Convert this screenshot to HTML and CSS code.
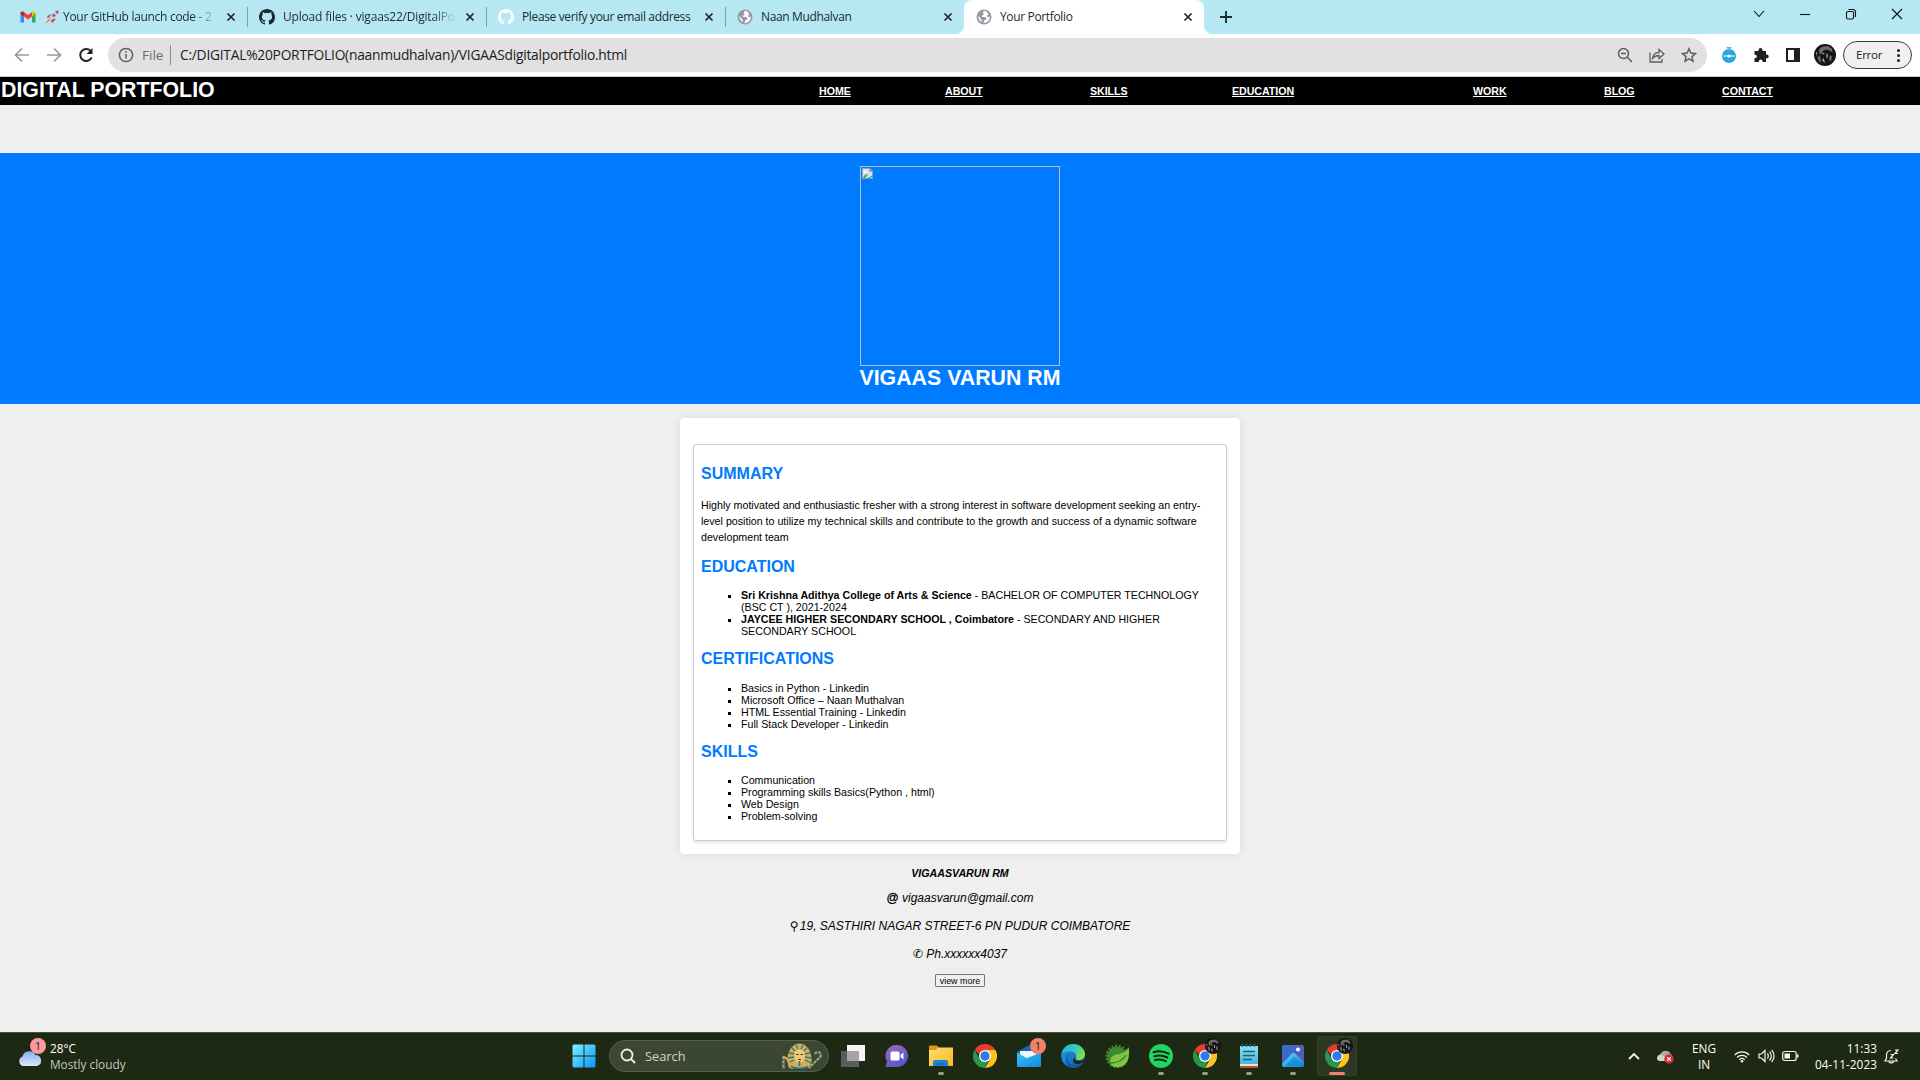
FILE: index.html
```html
<!DOCTYPE html>
<html lang="en">
<head>
<meta charset="utf-8">
<title>Your Portfolio</title>
<link rel="stylesheet" href="styles.css">
</head>
<body>
<svg class="defs" width="0" height="0" aria-hidden="true">
  <defs>
    <linearGradient id="g-win" x1="0" y1="0" x2="1" y2="1"><stop offset="0" stop-color="#7df0ff"/><stop offset="1" stop-color="#0a94fb"/></linearGradient>
    <linearGradient id="g-cloud" x1="0" y1="0" x2="0" y2="1"><stop offset="0" stop-color="#84aef2"/><stop offset="1" stop-color="#dbe8fc"/></linearGradient>
    <linearGradient id="g-chat" x1="0" y1="0" x2="0.6" y2="1"><stop offset="0" stop-color="#a26ab8"/><stop offset="1" stop-color="#5059d0"/></linearGradient>
    <linearGradient id="g-folder" x1="0" y1="0" x2="1" y2="1"><stop offset="0" stop-color="#ffdf70"/><stop offset="1" stop-color="#f8b91f"/></linearGradient>
    <linearGradient id="g-edge" x1="0" y1="0" x2="1" y2="0.5"><stop offset="0" stop-color="#2aa9e0"/><stop offset="0.6" stop-color="#36c9c0"/><stop offset="1" stop-color="#7be04a"/></linearGradient>
    <linearGradient id="g-edge2" x1="0" y1="0" x2="1" y2="1"><stop offset="0" stop-color="#27a4ea"/><stop offset="1" stop-color="#0c4f9e"/></linearGradient>
    <linearGradient id="g-photo" x1="0" y1="0" x2="1" y2="1"><stop offset="0" stop-color="#2b74d6"/><stop offset="1" stop-color="#6a4fae"/></linearGradient>
    <linearGradient id="g-hill" x1="0" y1="0" x2="1" y2="1"><stop offset="0" stop-color="#5be0ff"/><stop offset="1" stop-color="#0a83dc"/></linearGradient>
    <linearGradient id="g-note" x1="0" y1="0" x2="0" y2="1"><stop offset="0" stop-color="#8fe0f2"/><stop offset="1" stop-color="#45b2d6"/></linearGradient>
    <linearGradient id="g-mail" x1="0" y1="0" x2="1" y2="1"><stop offset="0" stop-color="#35c4f4"/><stop offset="1" stop-color="#1288dd"/></linearGradient>
    <symbol id="x" viewBox="0 0 10 10"><path d="M1.5 1.5l7 7M8.5 1.5l-7 7" stroke="#222" stroke-width="1.7" fill="none"/></symbol>
    <symbol id="github" viewBox="0 0 16 16"><path fill="currentColor" d="M8 0C3.58 0 0 3.58 0 8c0 3.54 2.29 6.53 5.47 7.59.4.07.55-.17.55-.38 0-.19-.01-.82-.01-1.49-2.01.37-2.53-.49-2.69-.94-.09-.23-.48-.94-.82-1.13-.28-.15-.68-.52-.01-.53.63-.01 1.08.58 1.23.82.72 1.21 1.87.87 2.33.66.07-.52.28-.87.51-1.07-1.78-.2-3.64-.89-3.64-3.95 0-.87.31-1.59.82-2.15-.08-.2-.36-1.02.08-2.12 0 0 .67-.21 2.2.82a7.6 7.6 0 014 0c1.53-1.04 2.2-.82 2.2-.82.44 1.1.16 1.92.08 2.12.51.56.82 1.27.82 2.15 0 3.07-1.87 3.75-3.65 3.95.29.25.54.73.54 1.48 0 1.07-.01 1.93-.01 2.2 0 .21.15.46.55.38A8.01 8.01 0 0016 8c0-4.42-3.58-8-8-8z"/></symbol>
    <symbol id="globe" viewBox="0 0 16 16"><circle cx="8" cy="8" r="7.5" fill="#949aa2"/><path fill="#fff" d="M9 1.8c-2 .7-2.500 1.700-1.700 2.700.9.6.3 1.600-.7 1.800-1.200.3-1 1.700.2 1.800 1.600.1 3.200 0 3.700 1.200.3 1-.8 1.500-1.800 1.700-.9.3-.5 2-1.300 2.900A6 6 0 0014 7.500c-.9 1-2.300.8-2.800-.3-.4-.9.3-1.500 1.300-1.800A6 6 0 009 1.800zM2.100 7c.3 3 1.900 5 3.400 5.900.5-1.100.3-2-.5-2.800C4 9.300 3.600 8 2.100 7z"/></symbol>
    <symbol id="chrome" viewBox="0 0 24 24"><path fill="#e63d31" d="M1.600 6A12 12 0 0122.400 6H12L8 12z"/><path fill="#fcc31e" d="M22.400 6A12 12 0 0112 24l5.200-9L17 9l-5-3z"/><path fill="#279847" d="M12 24A12 12 0 011.600 6l5.200 9 5.200 3 3-1z"/><circle cx="12" cy="12" r="6" fill="#fff"/><circle cx="12" cy="12" r="4.700" fill="#2f7bea"/></symbol>
    <symbol id="face" viewBox="0 0 16 16"><circle cx="8" cy="8" r="8" fill="#151515"/><path fill="#6e6e6e" d="M3.500 4l2.500-2 4-.5 3 2 .5 2.500-2-1-1.500-1-3 .5-1 2-2 1zM2.500 10l1.500-2 1 3-.5 3zM11.500 8l1.500 1-.5 3.500-1.500-1z"/><path fill="#a5a5a5" d="M6 6.500h1.500v1H6zM9 7h1v3H9zM1.500 6h1l-1 3zM6 12l1-2 1 4z"/></symbol>
  </defs>
</svg>

<div class="screen">
  <header class="browser">
    <div class="tabs">
      <div class="tab">
        <svg class="fav" viewBox="0 0 16 16"><path fill="#4285f4" d="M.5 4v9.500H4V7z"/><path fill="#34a853" d="M15.500 4v9.500H12V7z"/><path fill="#c5221f" d="M.5 4.500C.5 2.500 2.500 2 4 3v4.500L.5 5z"/><path fill="#ea4335" d="M4 3l4 3 4-3v4.500l-4 3-4-3z"/><path fill="#fbbc04" d="M12 3c1.500-1 3.500-.5 3.500 1.500L12 7.500z"/></svg>
        <span class="title t1 fade"><svg class="rocket" viewBox="0 0 16 16"><path fill="#d9344a" d="M1.500 8.500L6 4.500l6 6L8 15l-1-4-3-2.500z"/><path fill="#c9d3dc" d="M4.500 9C6.500 4 10 1.500 15.500.5c0 5.500-3 9-8 11z"/><path fill="#d9344a" d="M11.500 1.600l4-1.100-.7 4.300z"/><circle cx="10" cy="6" r="1.800" fill="#3a7fae"/><path fill="#f4882a" d="M4 10l2 2-5.500 3.500z"/></svg>Your GitHub launch code - 2</span>
        <svg class="close"><use href="#x"/></svg>
      </div>
      <div class="tab sep">
        <svg class="fav dark"><use href="#github"/></svg>
        <span class="title t2 fade">Upload files · vigaas22/DigitalPo</span>
        <svg class="close"><use href="#x"/></svg>
      </div>
      <div class="tab sep">
        <svg class="fav light"><use href="#github"/></svg>
        <span class="title t3">Please verify your email address</span>
        <svg class="close"><use href="#x"/></svg>
      </div>
      <div class="tab sep">
        <svg class="fav"><use href="#globe"/></svg>
        <span class="title t4">Naan Mudhalvan</span>
        <svg class="close"><use href="#x"/></svg>
      </div>
      <div class="tab active">
        <svg class="fav"><use href="#globe"/></svg>
        <span class="title t5">Your Portfolio</span>
        <svg class="close"><use href="#x"/></svg>
      </div>
      <svg class="plus" viewBox="0 0 12 12"><path d="M6 0v12M0 6h12" stroke="#1c2b30" stroke-width="1.900"/></svg>
      <div class="winctl">
        <svg viewBox="0 0 12 12"><path d="M1 3l5 5.500L11 3"/></svg>
        <svg viewBox="0 0 12 12"><path d="M1 6.500h10"/></svg>
        <svg viewBox="0 0 12 12"><rect x="1.500" y="3.500" width="7" height="7.500" rx="1.500"/><path d="M3.500 1.500h4.500a2.500 2.500 0 012.500 2.500v5"/></svg>
        <svg viewBox="0 0 12 12"><path d="M1 1l10 10M11 1L1 11"/></svg>
      </div>
    </div>
    <div class="toolbar">
      <div class="navbtns">
        <svg class="off" viewBox="0 0 16 16"><path d="M15 8H2M8 1.500L1.500 8 8 14.500"/></svg>
        <svg class="off" viewBox="0 0 16 16"><path d="M1 8h13M8 1.500L14.500 8 8 14.500"/></svg>
        <svg class="on" viewBox="0 0 16 16"><path d="M13.700 10.500A6 6 0 1113 4.300"/><path d="M14.500 1v6h-6z" class="solid"/></svg>
      </div>
      <div class="omnibox">
        <svg class="info" viewBox="0 0 16 16"><circle cx="8" cy="8" r="6.600"/><path d="M8 7v4.500M8 4v1.800"/></svg>
        <span class="scheme">File</span>
        <span class="url">C:/DIGITAL%20PORTFOLIO(naanmudhalvan)/VIGAASdigitalportfolio.html</span>
        <div class="boxicons">
          <svg viewBox="0 0 16 16"><circle cx="6.500" cy="6.500" r="5"/><path d="M4 6.500h5M10.300 10.300L15 15"/></svg>
          <svg viewBox="0 0 16 16"><path d="M1 5.500V15h12v-3M3.500 11.500c.5-4 3-6 6.500-6V2.500L15 7l-5 4.500V8.500c-3 0-5 1-6.500 3z" stroke-width="1.300"/></svg>
          <svg viewBox="0 0 16 16"><path d="M8 1.800l1.900 4.300 4.600.4-3.500 3.100 1 4.600L8 11.800l-4 2.400 1-4.600L1.500 6.500l4.600-.4z"/></svg>
        </div>
      </div>
      <div class="exts">
        <svg viewBox="0 0 16 16"><circle cx="8" cy="9" r="7" fill="#2ba6de"/><path d="M5.500.8h5M8 1v3" stroke="#57b9e6" stroke-width="1.500"/><path d="M2.500 9h11" stroke="#d5f0fc" stroke-width="1.300"/><circle cx="8" cy="9" r="1.600" fill="#fff"/></svg>
        <svg viewBox="0 0 16 16"><path fill="#202124" d="M1.500 4h4V3a2 2 0 014 0v1H13v3.500h.8a1.900 1.900 0 010 3.800H13V15H9.500v-.8a1.800 1.800 0 00-3.600 0v.8H1.500v-4h.7a1.600 1.600 0 000-3.200h-.7z"/></svg>
        <svg viewBox="0 0 16 16"><path fill="#202124" fill-rule="evenodd" d="M1 1h14v14H1zM3 3v10h6V3z"/></svg>
        <svg class="avatar"><use href="#face"/></svg>
      </div>
      <div class="error"><span>Error</span><i></i></div>
    </div>
  </header>

  <main class="page">
    <nav class="nav">
      <h1 class="brand">DIGITAL PORTFOLIO</h1>
      <a>HOME</a><a>ABOUT</a><a>SKILLS</a><a>EDUCATION</a><a>WORK</a><a>BLOG</a><a>CONTACT</a>
    </nav>
    <section class="hero">
      <div class="photo"><svg viewBox="0 0 12 12"><path fill="#d2e2f8" stroke="#9aa3ac" d="M.5.500h8l3 3v8H.5z"/><path fill="#fff" d="M2 4.500c0-1.500 2-2 2.500-.8 1.200-.2 1.500.8 1.300 1.300H2z"/><path fill="#55ad3e" d="M1 11c1-3 3-4.500 5.500-4L4 11z"/><path fill="#007bff" d="M12 6.500V8l-7 4h1.800L12 9z"/><path fill="#8b949c" d="M8 0v4h4z"/></svg></div>
      <h2 class="name">VIGAAS VARUN RM</h2>
    </section>
    <section class="card">
      <div class="resume">
        <h3 class="first">SUMMARY</h3>
        <p>Highly motivated and enthusiastic fresher with a strong interest in software development seeking an entry-<br>level position to utilize my technical skills and contribute to the growth and success of a dynamic software<br>development team</p>
        <h3>EDUCATION</h3>
        <ul>
          <li><b>Sri Krishna Adithya College of Arts &amp; Science</b> - BACHELOR OF COMPUTER TECHNOLOGY<br>(BSC CT ), 2021-2024</li>
          <li><b>JAYCEE HIGHER SECONDARY SCHOOL , Coimbatore</b> - SECONDARY AND HIGHER<br>SECONDARY SCHOOL</li>
        </ul>
        <h3 class="certs">CERTIFICATIONS</h3>
        <ul>
          <li>Basics in Python - Linkedin</li>
          <li>Microsoft Office – Naan Muthalvan</li>
          <li>HTML Essential Training - Linkedin</li>
          <li>Full Stack Developer - Linkedin</li>
        </ul>
        <h3>SKILLS</h3>
        <ul>
          <li>Communication</li>
          <li>Programming skills Basics(Python , html)</li>
          <li>Web Design</li>
          <li>Problem-solving</li>
        </ul>
      </div>
    </section>
    <footer class="contact">
      <strong>VIGAASVARUN RM</strong>
      <span><b class="at">@</b> vigaasvarun@gmail.com</span>
      <span><i class="sym pin">⚲</i> 19, SASTHIRI NAGAR STREET-6 PN PUDUR COIMBATORE</span>
      <span><i class="sym">✆</i> Ph.xxxxxx4037</span>
      <button>view more</button>
    </footer>
  </main>

  <div class="taskbar">
    <div class="weather">
      <div class="wicon"><svg viewBox="0 0 24 16"><path fill="url(#g-cloud)" d="M5 16a5 5 0 01-.5-9.500A7 7 0 0117.500 5 5.600 5.600 0 0119 16z"/></svg><em>1</em></div>
      <div class="wtext"><span>28°C</span><span class="dim">Mostly cloudy</span></div>
    </div>
    <div class="center">
      <svg class="start" viewBox="0 0 24 24"><path fill="url(#g-win)" d="M1.500.500H11.500v11H.500V1.500zM12.500.500H22.500l1 1v10H12.500zM.500 12.500H11.500v11H1.500l-1-1zM12.500 12.500h11v10l-1 1h-10z"/></svg>
      <div class="search">
        <svg class="mag" viewBox="0 0 16 16"><circle cx="7" cy="7" r="5.500"/><path d="M11 11l4 4"/></svg>
        <span>Search</span>
        <svg class="pharaoh" viewBox="0 0 40 26">
          <path fill="#d6ab58" d="M7 25C3 15 7 1 17.500.5 28 1 32 15 28 25z"/>
          <path d="M6 20l6-3M6 15l6-1M7 10l6 1M10 5l4 4M14 2l2 4M29 20l-6-3M29 15l-6-1M28 10l-6 1M25 5l-4 4M21 2l-2 4" stroke="#187d93" stroke-width="1.300"/>
          <path fill="#efc878" d="M12.500 9c2-3 8-3 10 0 1 4 0 9-5 12C12.500 18 11.500 13 12.500 9z"/>
          <path d="M14 11.500h2.500M18.500 11.500h2.500M16 16.500h3" stroke="#533217" stroke-width="1"/>
          <path d="M17.500 18v5" stroke="#187d93" stroke-width="1.800"/>
          <path d="M1.500 26V14l3 1 6 11M27 25l9-9c4-2 3-7 0-7-2 0-3 1-3 3" stroke="#d6ab58" stroke-width="2" fill="none"/>
          <path d="M1.500 26V15M28 24l8-8c4-2 3-7 0-7-2 0-3 1-3 3" stroke="#187d93" stroke-width="2" fill="none" stroke-dasharray="2 2"/>
          <path d="M9 23.500c4 2.500 13 2.500 17 0" stroke="#187d93" stroke-width="1.600" fill="none"/>
        </svg>
      </div>
      <div class="apps">
        <div class="app"><svg viewBox="0 0 24 24"><path fill="#f5f5f5" d="M6 1h18v16H6z"/><path fill="#5c5c5c" d="M0 7h18v16H0z"/><path fill="#a5a5a5" d="M6 7h12v10H6z"/></svg></div>
        <div class="app"><svg viewBox="0 0 24 24"><path fill="url(#g-chat)" d="M12 1a11 11 0 110 22H.500L2 17.500A11 11 0 0112 1z"/><rect x="5.500" y="7.500" width="9" height="9" rx="1.500" fill="#fff"/><path fill="#fff" d="M15.500 11l3-2.500v7l-3-2.500z"/></svg></div>
        <div class="app run"><svg viewBox="0 0 24 24"><path fill="#d99a0b" d="M0 2.500Q0 1.500 1 1.500h7l2 2v3H0z"/><path fill="url(#g-folder)" d="M0 6h7l2-2.500h15V22H0z"/><path fill="#1684d8" d="M4 22v-4q0-2 2-2h11q2 0 2 2v4z"/><path fill="#0a5aa6" d="M7.500 19.500h8v1h-8z"/></svg></div>
        <div class="app"><svg><use href="#chrome"/></svg></div>
        <div class="app"><svg viewBox="0 0 24 24"><path fill="#1269bb" d="M0 8l12-7 12 7v6H0z"/><path fill="#f2f5f8" d="M3 7h18v4l-9 6-9-6z"/><path fill="url(#g-mail)" d="M0 8.500L24 22.500V23H0zM24 8.500V23L9 14.500z"/></svg><em class="badge">1</em></div>
        <div class="app"><svg viewBox="0 0 24 24"><circle cx="12" cy="12" r="11.800" fill="url(#g-edge2)"/><path fill="url(#g-edge)" d="M.5 10C2 3 7 0 12 0c7 0 12 5 12 10 0 4-3 6-6 6-3 0-4-1-3-2.500 1-3-1-6-5-6C6 7 2 8 .5 10z"/><path fill="#0f5cae" d="M9 9c-5 4-2 12 5 12 4 0 7-1 8-3-1 4-6 6-10 6C4 23 3 11 9 9z"/><path fill="#1d2913" d="M14.500 13.500c-1 2 0 3.500 3.500 3.500 2 0 4.500-1 5.500-2-1 3-4 5-7.500 5-4 0-5.500-5-1.500-6.500z"/></svg></div>
        <div class="app"><svg viewBox="0 0 24 24"><circle cx="12" cy="12.500" r="10" fill="#3b8a31"/><circle cx="12" cy="12.500" r="10.700" fill="none" stroke="#3b8a31" stroke-width="2" stroke-dasharray="2 1.700"/><path fill="#84c443" d="M23.500 3c2 10-1 20-11 20.500C6 23.500 4 19 6 14c4-6 14-2 17.500-11z"/><path d="M6 19c7 0 12-3 15-8" stroke="#2f7b2b" stroke-width="1.300" fill="none"/></svg></div>
        <div class="app run"><svg viewBox="0 0 24 24"><circle cx="12" cy="12" r="12" fill="#1ed760"/><path d="M4.500 8.200c5-1.500 10.500-1 15 1.500M5.500 12.200c4.300-1.200 8.800-.8 12.700 1.300M6 16c3.700-1 7.500-.6 10.800 1.200" stroke="#10240f" stroke-width="2.100" stroke-linecap="round" fill="none"/></svg></div>
        <div class="app run"><svg><use href="#chrome"/></svg><svg class="who"><use href="#face"/></svg></div>
        <div class="app run"><svg viewBox="0 0 24 24"><path fill="url(#g-note)" d="M3 2h18v19H3z"/><path fill="#e9e4dd" d="M3 20h18v2H3z"/><path fill="#b25a1a" d="M3 22h18v2H3z"/><path d="M6 7.500h12M6 11.500h12M6 15.500h9" stroke="#14607f" stroke-width="1.300"/><path d="M5.500 0v3M9.500 0v3M13.500 0v3M17.500 0v3" stroke="#116e96" stroke-width="1.500"/></svg></div>
        <div class="app run"><svg viewBox="0 0 24 24"><rect x="1" y="1" width="22" height="22" rx="2" fill="url(#g-photo)"/><path fill="url(#g-hill)" d="M1 20L11 9.500q1.500-1.500 3 0L23 18v3q0 2-2 2H2z"/><path d="M3 23l10-10.500L23 22" fill="#1686dc" fill-opacity=".7"/><circle cx="17" cy="5.500" r="2" fill="#fff"/></svg></div>
        <div class="app run current"><svg><use href="#chrome"/></svg><svg class="who"><use href="#face"/></svg></div>
      </div>
    </div>
    <div class="tray">
      <svg class="up" viewBox="0 0 12 8"><path d="M1 7l5-5 5 5"/></svg>
      <svg class="cloud" viewBox="0 0 17 14"><path fill="#a9aaa5" d="M3 11a3.500 3.500 0 010-6.500C5-.5 12-.5 13.500 4c3 1 2.500 6 0 7z"/><path fill="#d3d4d0" d="M0 8c0-3 3-4 5-3l5 4-2 2H3C1 11 0 10 0 8z"/><circle cx="12" cy="9" r="4.700" fill="#dc2b36"/><path d="M10.200 7.200l3.600 3.600M13.800 7.200l-3.600 3.600" stroke="#fff" stroke-width="1.200"/></svg>
      <div class="lang"><span>ENG</span><span>IN</span></div>
      <svg class="wifi" viewBox="0 0 16 13"><path d="M.8 5a10 10 0 0114.400 0M3 7.500a7 7 0 0110 0M5.300 9.700a4 4 0 015.400 0"/><circle cx="8" cy="11.200" r="1.300" class="fill"/></svg>
      <svg class="vol" viewBox="0 0 17 14"><path d="M1 5h2.500L7 1.500v11L3.500 9H1zM9.300 4.500a3.500 3.500 0 010 5M11.500 2.700a6 6 0 010 8.600M13.600 1a8.500 8.500 0 010 12"/></svg>
      <svg class="bat" viewBox="0 0 17 12"><rect x=".7" y="1.500" width="13.500" height="9" rx="2"/><path class="fill" d="M2.500 3.500h5.500v5H2.500zM15 4.500h1.500v3H15z"/></svg>
      <div class="clock"><span>11:33</span><span>04-11-2023</span></div>
      <svg class="bell" viewBox="0 0 15 15"><path d="M7 1.500c-3 0-4.500 2-4.500 4.500v3L1 12h12l-1.500-2.500M5 12.500c.5 2 4 2 4.500 0M6.500 5.500h3l-3 3.500h3M11 1h3l-3 3.500h3"/></svg>
    </div>
  </div>
</div>
</body>
</html>
```
FILE: styles.css
```css
* { box-sizing: border-box; }
body { margin: 0; background: #efefef; color: #000; font-family: "Liberation Sans", Arial, sans-serif; }
h1, h2, h3, p, ul { margin: 0; padding: 0; }
svg { display: block; flex: none; }
.defs { position: absolute; }
.screen { width: 1920px; height: 1080px; display: flex; flex-direction: column; overflow: hidden; }

/* browser frame */
.browser { height: 77px; flex: none; background: #fff; border-bottom: 1px solid #c9cccd; font-family: "Open Sans", "Noto Sans", sans-serif; }
.tabs { display: flex; height: 34px; background: #b5e8f3; padding-left: 8px; }
.tab { width: 239px; height: 34px; display: flex; align-items: center; padding: 0 11px 0 12px; position: relative; }
.tab.sep::before { content: ""; position: absolute; left: 0; top: 7px; width: 1px; height: 20px; background: #7fa0a8; }
.tab.active { background: #fff; border-radius: 8px 8px 0 0; width: 240px; }
.tab.active::before, .tab.active::after { content: ""; position: absolute; bottom: 0; width: 8px; height: 8px; }
.tab.active::before { left: -8px; background: radial-gradient(circle at 0 0, transparent 7.5px, #fff 8px); }
.tab.active::after { right: -8px; background: radial-gradient(circle at 100% 0, transparent 7.5px, #fff 8px); }
.fav { width: 16px; height: 16px; }
.dark { color: #1f272b; }
.light { color: #fafdff; }
.title { width: 174px; margin-left: 8px; font-size: 12px; line-height: 16px; white-space: nowrap; color: #1c2b30; display: flex; align-items: center; }
.fade { -webkit-mask-image: linear-gradient(90deg, #000 86%, transparent 100%); mask-image: linear-gradient(90deg, #000 86%, transparent 100%); }
.t1 { letter-spacing: -.3px; }
.t2 { letter-spacing: -.18px; }
.t3 { letter-spacing: -.36px; }
.t4 { letter-spacing: -.35px; }
.t5 { letter-spacing: -.35px; }
.rocket { width: 14px; height: 14px; margin: 0 4px 0 1px; }
.close { width: 10px; height: 10px; }
.tab .close { margin-left: 9px; }
.plus { width: 12px; height: 12px; margin: 11px 0 0 16px; }
.winctl { display: flex; gap: 34px; margin: 8px 17px 0 auto; }
.winctl svg { width: 12px; height: 12px; fill: none; stroke: #111; stroke-width: 1.1; }

.toolbar { display: flex; align-items: center; height: 42px; padding: 0 8px 0 14px; }
.navbtns { display: flex; gap: 16px; width: 94px; }
.navbtns svg { width: 16px; height: 16px; fill: none; stroke-width: 1.7; }
.off { stroke: #9a9a9a; }
.on { stroke: #202124; }
.navbtns .on { stroke-width: 2; }
.on .solid { fill: #202124; stroke: none; }
.omnibox { display: flex; align-items: center; width: 1599px; height: 34px; border-radius: 17px; background: #e1e1e1; padding: 0 10px; }
.info { width: 16px; height: 16px; fill: none; stroke: #5c5f62; stroke-width: 1.5; }
.scheme { font-size: 13.5px; line-height: 20px; color: #6a6d70; margin-left: 8px; width: 29px; border-right: 1px solid #8c8c8c; }
.url { font-size: 13.8px; line-height: 20px; color: #1f2023; margin-left: 9px; letter-spacing: -.25px; white-space: nowrap; }
.boxicons { display: flex; gap: 16px; margin-left: auto; }
.boxicons svg { width: 16px; height: 16px; fill: none; stroke: #5c5f62; stroke-width: 1.5; }
.exts { display: flex; align-items: center; gap: 16px; margin-left: 14px; }
.exts svg { width: 16px; height: 16px; }
.exts .avatar { width: 22px; height: 22px; margin-left: -3px; }
.error { margin-left: auto; width: 69px; height: 28px; border: 1px solid #3a3a3a; border-radius: 14px; background: #f0f0f0; display: flex; align-items: center; justify-content: space-between; padding: 0 11px 2px 12px; font-size: 11.5px; letter-spacing: -.25px; color: #202124; }
.error i { width: 3px; height: 3px; margin-top: 2px; border-radius: 50%; background: #202124; box-shadow: 0 -5px #202124, 0 5px #202124; }

/* portfolio page */
.page { flex: 1; min-height: 0; background: #efefef; }
.nav { height: 28px; background: #000; color: #fff; display: grid; grid-template-columns: 818px 126px 145px 142px 241px 131px 118px 1fr; padding-left: 1px; font-weight: bold; }
.brand { font-size: 21.333px; line-height: 26px; }
.nav a { font-size: 10.667px; line-height: 28px; letter-spacing: -.05px; text-decoration: underline; text-underline-offset: 1px; }
.hero { height: 251px; margin-top: 48px; background: #007bff; padding-top: 13px; display: flex; flex-direction: column; align-items: center; }
.photo { width: 200px; height: 200px; border: 1px solid #b9bfc6; padding: 1px; }
.photo svg { width: 11px; height: 11px; }
.name { font-size: 21.333px; line-height: 24px; color: #fff; white-space: nowrap; }
.card { width: 560px; height: 436px; margin: 14px auto 0; padding: 26px 13px 13px; background: #fff; border-radius: 4px; box-shadow: 0 0 8px rgba(0, 0, 0, .1); }
.resume { height: 397px; border: 1px solid #ccc; border-radius: 3px; padding: 0 7px; box-shadow: 0 2px 3px rgba(0, 0, 0, .1); font-size: 10.667px; line-height: 12px; }
.resume h3 { font-size: 16px; line-height: 18px; color: #007bff; margin: 13px 0; }
.resume .first { margin: 20px 0 14px; }
.resume .certs { margin-bottom: 14px; }
.resume p { line-height: 16px; white-space: nowrap; }
.resume ul { padding-left: 40px; list-style: square; white-space: nowrap; }
.contact { display: flex; flex-direction: column; align-items: center; font-style: italic; font-size: 12px; line-height: 16px; padding-top: 11px; white-space: nowrap; }
.contact strong { font-size: 10.667px; margin-bottom: 9px; }
.contact span { margin-bottom: 12px; }
.contact .at { font-weight: normal; font-style: normal; -webkit-text-stroke: .3px #000; }
.contact .sym { font-family: "DejaVu Sans", sans-serif; font-size: 12px; line-height: 12px; }
.contact .pin { margin-right: -2px; }
.contact button { width: 50px; height: 13px; padding: 0; border: 1px solid #767676; border-radius: 1px; background: #efefef; color: #000; font: 8.889px/10px "Liberation Sans", Arial, sans-serif; }

/* taskbar */
.taskbar { height: 48px; flex: none; background: #1d2913; border-top: 1px solid #4a523f; display: grid; grid-template-columns: 572px 785px 1fr; color: #fff; font-family: "Open Sans", "Noto Sans", sans-serif; font-size: 11.8px; line-height: 16px; }
.weather { display: flex; padding: 7px 0 0 18px; }
.wicon { position: relative; width: 24px; height: 34px; padding-top: 10px; }
.wicon svg { width: 24px; height: 16px; }
.wicon em { position: absolute; left: 12px; top: -2px; width: 16px; height: 16px; border-radius: 50%; background: #ff99a0; color: #222; text-align: center; font-style: normal; font-size: 11px; }
.wtext { display: flex; flex-direction: column; margin-left: 8px; }
.dim { color: #c4c8c0; }
.center { display: flex; align-items: center; height: 46px; }
.start { width: 24px; height: 24px; }
.search { width: 220px; height: 32px; margin-left: 13px; border: 1px solid #565f4d; border-radius: 16px; background: #3c4733; display: flex; align-items: center; padding: 0 6px 0 10px; font-size: 12.8px; color: #cfd2cb; }
.mag { width: 16px; height: 16px; fill: none; stroke: #eee; stroke-width: 1.8; margin-right: 9px; }
.pharaoh { width: 40px; height: 26px; margin-left: auto; }
.apps { display: flex; gap: 4px; margin-left: 4px; }
.app { width: 40px; height: 40px; padding: 8px; position: relative; border-radius: 4px; }
.app svg { width: 24px; height: 24px; }
.app .who { position: absolute; left: 20px; top: 2px; width: 16px; height: 16px; }
.run::after { content: ""; position: absolute; left: 17px; top: 36px; width: 6px; height: 3px; border-radius: 2px; background: #969c90; }
.current { background: #2c3823; box-shadow: inset 0 0 0 1px #35402c; }
.current::after { left: 12px; width: 16px; background: #f4806a; }
.badge { position: absolute; left: 21px; top: 2px; width: 16px; height: 16px; border-radius: 50%; background: #f5806a; color: #222; font-style: normal; font-size: 11px; text-align: center; }
.tray { display: flex; align-items: center; height: 46px; padding-left: 271px; }
.tray svg { fill: none; stroke: #f4f5f3; stroke-width: 1.2; }
.tray .fill { fill: #f4f5f3; stroke: none; }
.up { width: 12px; height: 8px; }
.tray .up { stroke-width: 1.8; }
.tray .cloud { width: 17px; height: 14px; margin: 2px 0 0 17px; stroke: none; }
.lang, .clock { display: flex; flex-direction: column; line-height: 16px; }
.lang { width: 30px; margin-left: 15px; align-items: center; }
.wifi { width: 16px; height: 13px; margin-left: 15px; }
.vol { width: 17px; height: 14px; margin-left: 8px; }
.bat { width: 17px; height: 12px; margin-left: 7px; }
.clock { width: 66px; margin-left: 12px; align-items: flex-end; letter-spacing: .05px; }
.bell { width: 15px; height: 15px; margin-left: 7px; }
```
